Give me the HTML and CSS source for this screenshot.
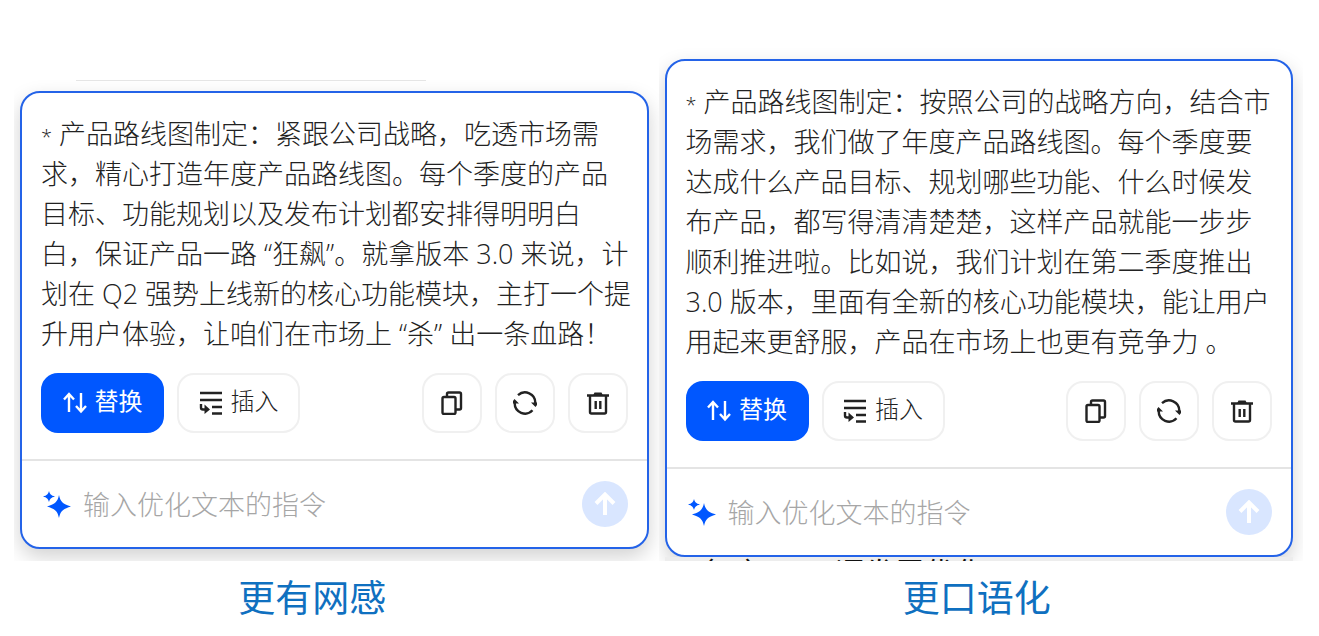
FILE: index.html
```html
<!DOCTYPE html>
<html lang="zh-CN">
<head>
<meta charset="utf-8">
<meta name="viewport" content="width=device-width, initial-scale=1">
<title>文本优化风格对比</title>
<link rel="stylesheet" href="styles.css">
</head>
<body>
<svg class="sprite" aria-hidden="true">
  <symbol id="i-swap" viewBox="0 0 24 24"><path d="M6 21V3M1 8.500 6 3l5 5.500M18 2v18M13 15l5 5.500 5-5.500"/></symbol>
  <symbol id="i-insert" viewBox="0 0 24 24"><path d="M1 2h22M1 9h22M13 16h10M13 22.500h10M2 13v3.500q0 2 2 2h4"/><path class="solid" d="M5.500 13.500 11 18.500l-5.500 4.500z"/></symbol>
  <symbol id="i-copy" viewBox="0 0 24 24"><rect x="2.500" y="6" width="13" height="17" rx="1.500"/><path d="M7 5.500V3q0-1.500 1.500-1.500h11Q21 1.500 21 3v14q0 1.500-1.500 1.500H16"/></symbol>
  <symbol id="i-refresh" viewBox="0 0 24 24"><path d="M5 4.200A10.300 10.300 0 0 1 22.300 12M19.500 19.300A10.300 10.300 0 0 1 1.700 12"/><path class="solid" d="M18 11.500h8L22.500 16zM-2 12.500 1.500 8l4.500 4.500z"/></symbol>
  <symbol id="i-trash" viewBox="0 0 24 24"><path d="M1 4.500h22M4 5v16q0 1.500 1.500 1.500h13q1.500 0 1.500-1.500V5M9.700 10v8M14.300 10v8"/><path class="solid" d="M7 4.500 8.500 1.500h7L17 4.500z"/></symbol>
  <symbol id="i-spark" viewBox="0 0 28 28"><path d="M16 5c1.400 6.500 3.500 9 12 11.500-8.500 2.500-10.600 5-12 11.500-1.400-6.500-3.500-9-12-11.500C12.500 14 14.600 11.500 16 5zM6 1c.8 3.200 2 4.400 6 5.500-4 1.100-5.200 2.300-6 5.500-.8-3.200-2-4.400-6-5.500C4 5.400 5.200 4.200 6 1z"/></symbol>
  <symbol id="i-up" viewBox="0 0 24 24"><path d="M12 23V3M3 11.500l9-9 9 9"/></symbol>
</svg>
<main class="compare">
  <figure class="sample">
    <div class="shot shot-left">
      <hr class="rule">
      <section class="card">
        <p class="answer"><span class="star">*</span> 产品路线图制定：紧跟公司战略，吃透市场需<br>求，精心打造年度产品路线图。每个季度的产品<br>目标、功能规划以及发布计划都安排得明明白<br>白，保证产品一路 “狂飙”。就拿版本 3.0 来说，计<br>划在 Q2 强势上线新的核心功能模块，主打一个提<br>升用户体验，让咱们在市场上 “杀” 出一条血路！</p>
        <div class="actions">
          <button class="btn primary" type="button"><svg class="icon"><use href="#i-swap"/></svg><span class="label">替换</span></button>
          <button class="btn" type="button"><svg class="icon"><use href="#i-insert"/></svg><span class="label">插入</span></button>
          <div class="tools">
            <button class="btn square" type="button" aria-label="复制"><svg class="icon"><use href="#i-copy"/></svg></button>
            <button class="btn square" type="button" aria-label="重新生成"><svg class="icon"><use href="#i-refresh"/></svg></button>
            <button class="btn square" type="button" aria-label="删除"><svg class="icon"><use href="#i-trash"/></svg></button>
          </div>
        </div>
        <form class="prompt">
          <svg class="spark" aria-hidden="true"><use href="#i-spark"/></svg>
          <input class="field" type="text" placeholder="输入优化文本的指令" aria-label="输入优化文本的指令">
          <button class="send" type="button" aria-label="发送"><svg class="icon"><use href="#i-up"/></svg></button>
        </form>
      </section>
    </div>
    <figcaption class="caption caption-left">更有网感</figcaption>
  </figure>
  <figure class="sample">
    <div class="shot">
      <section class="card">
        <p class="answer"><span class="star">*</span> 产品路线图制定：按照公司的战略方向，结合市<br>场需求，我们做了年度产品路线图。每个季度要<br>达成什么产品目标、规划哪些功能、什么时候发<br>布产品，都写得清清楚楚，这样产品就能一步步<br>顺利推进啦。比如说，我们计划在第二季度推出<br>3.0 版本，里面有全新的核心功能模块，能让用户<br>用起来更舒服，产品在市场上也更有竞争力 。</p>
        <div class="actions">
          <button class="btn primary" type="button"><svg class="icon"><use href="#i-swap"/></svg><span class="label">替换</span></button>
          <button class="btn" type="button"><svg class="icon"><use href="#i-insert"/></svg><span class="label">插入</span></button>
          <div class="tools">
            <button class="btn square" type="button" aria-label="复制"><svg class="icon"><use href="#i-copy"/></svg></button>
            <button class="btn square" type="button" aria-label="重新生成"><svg class="icon"><use href="#i-refresh"/></svg></button>
            <button class="btn square" type="button" aria-label="删除"><svg class="icon"><use href="#i-trash"/></svg></button>
          </div>
        </div>
        <form class="prompt">
          <svg class="spark" aria-hidden="true"><use href="#i-spark"/></svg>
          <input class="field" type="text" placeholder="输入优化文本的指令" aria-label="输入优化文本的指令">
          <button class="send" type="button" aria-label="发送"><svg class="icon"><use href="#i-up"/></svg></button>
        </form>
      </section>
      <div class="behind">（二）可口语发展优化</div>
    </div>
    <figcaption class="caption">更口语化</figcaption>
  </figure>
</main>
</body>
</html>
```
FILE: styles.css
```css
* { box-sizing: border-box; }

body {
  margin: 0;
  background: #fff;
  color: #222;
  font-family: "Open Sans", "Noto Sans CJK SC", sans-serif;
  font-weight: 300;
}

.sprite { display: none; }

.compare {
  display: grid;
  grid-template-columns: 1fr 1fr;
  align-items: end;
  padding: 0 16px 0 14px;
}

.sample { margin: 0; }

.shot {
  overflow: hidden;
  padding: 59px 10px 0 6px;
}

.shot-left { padding-bottom: 12px; }

.rule {
  width: 350px;
  margin: 0 0 10px 56px;
  border: 0;
  border-top: 1px solid #e6e6e6;
}

.card {
  border: 2px solid #2463e8;
  border-radius: 20px;
  background: #fff;
  box-shadow: 0 8px 20px rgba(0, 0, 0, 0.18);
}

.answer {
  margin: 0;
  padding: 21px 0 0 19px;
  font-size: 27px;
  line-height: 40px;
  white-space: nowrap;
}

.star {
  font-size: 20px;
  line-height: 20px;
}

.actions {
  display: flex;
  gap: 13px;
  padding: 19px 19px 26px;
}

.tools {
  display: flex;
  gap: 13px;
  margin-left: auto;
}

.btn {
  display: flex;
  align-items: center;
  justify-content: center;
  gap: 8px;
  width: 123px;
  height: 60px;
  padding: 0;
  border: 2px solid #f0f0f0;
  border-radius: 17px;
  background: #fff;
  color: #222;
  font-family: inherit;
  font-size: 24px;
  font-weight: 300;
}

.label {
  padding-bottom: 4px;
  line-height: 32px;
}

.btn.primary {
  border-color: #0057ff;
  background: #0057ff;
  color: #fff;
  font-weight: 400;
}

.btn.square { width: 60px; }

.icon {
  width: 24px;
  height: 24px;
  overflow: visible;
  fill: none;
  stroke: currentColor;
  stroke-width: 2.4;
}

.solid { fill: currentColor; stroke: none; }

.prompt {
  display: flex;
  align-items: center;
  gap: 12px;
  height: 88px;
  padding: 0 19px 0 21px;
  border-top: 2px solid #e4e4e4;
}

.spark {
  width: 28px;
  height: 28px;
  fill: #0057ff;
}

.field {
  flex: 1;
  min-width: 0;
  padding: 0;
  border: 0;
  outline: 0;
  background: none;
  font-family: inherit;
  font-size: 27px;
  font-weight: 300;
}

.field::placeholder { color: #a6a6a6; }

.send {
  display: grid;
  place-items: center;
  width: 46px;
  height: 46px;
  padding: 0;
  border: 0;
  border-radius: 50%;
  background: #d9e6ff;
  color: #fff;
}

.send .icon { stroke-width: 4; }

.behind {
  height: 4px;
  padding-left: 20px;
  overflow: hidden;
  background: #ededed;
  color: #111;
  font-size: 30px;
  font-weight: 400;
  line-height: 32px;
}

.caption {
  height: 75px;
  padding-right: 8px;
  color: #0f70c0;
  font-size: 37px;
  font-weight: 400;
  line-height: 74px;
  text-align: center;
}

.caption-left { padding-right: 48px; }
```
